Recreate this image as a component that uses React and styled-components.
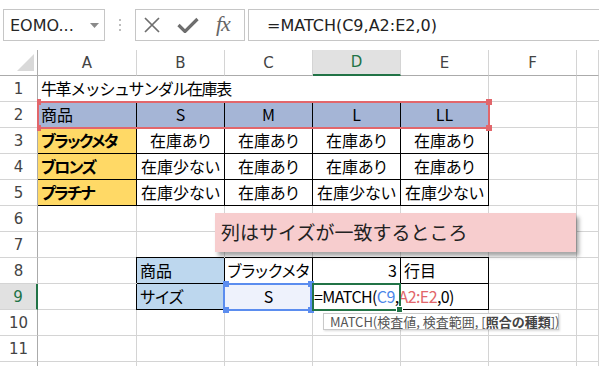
import React from "react";
import styled, { createGlobalStyle } from "styled-components";

const GlobalStyle = createGlobalStyle`
  html, body {
    margin: 0;
    padding: 0;
    background: #fff;
  }
  body {
    font-family: "Noto Sans CJK JP", sans-serif;
  }
`;

const GOLD = "#ffd966";
const HEAD_BLUE = "#a5b5d6";
const LIGHT_BLUE = "#bdd7ee";
const GRID = "#d4d4d4";
const HEAD_LINE = "#ababab";
const GREEN = "#217346";
const RED = "#e2666b";
const BLUE = "#5b8def";

const Page = styled.div`
  width: 599px;
  height: 366px;
  overflow: hidden;
  background: #fff;
`;

const FormulaBar = styled.div`
  height: 50px;
  box-sizing: border-box;
  display: flex;
  align-items: flex-start;
  padding: 9px 0 0 3px;
`;

const NameBox = styled.div`
  width: 102px;
  height: 32px;
  box-sizing: border-box;
  border: 1px solid #c6c6c6;
  display: flex;
  align-items: center;
  justify-content: space-between;
  padding: 0 5px 0 6px;
  font-family: "DejaVu Sans", sans-serif;
  font-size: 16px;
  color: #262626;
`;

const Grip = styled.div`
  width: 30px;
  height: 32px;
  display: flex;
  flex-direction: column;
  align-items: center;
  justify-content: center;
  gap: 3px;
`;

const GripDot = styled.span`
  width: 2px;
  height: 2px;
  background: #bdbdbd;
`;

const FxBox = styled.div`
  width: 110px;
  height: 32px;
  box-sizing: border-box;
  border: 1px solid #c6c6c6;
  display: flex;
  align-items: center;
  gap: 17px;
  padding-left: 8px;
`;

const Fx = styled.span`
  font-family: "Liberation Serif", serif;
  font-style: italic;
  font-size: 22px;
  color: #666;
  letter-spacing: -1px;
  margin-top: -2px;
`;

const FormulaInput = styled.div`
  flex: 1;
  margin-left: 3px;
  height: 32px;
  box-sizing: border-box;
  border: 1px solid #c6c6c6;
  border-right: none;
  display: flex;
  align-items: center;
  padding-left: 18px;
  font-family: "DejaVu Sans", sans-serif;
  font-size: 16px;
  color: #222;
`;

const SheetWrap = styled.div`
  position: relative;
`;

const Sheet = styled.div`
  display: grid;
  grid-template-columns: 38px 99px repeat(5, 88px) 1fr;
  grid-auto-rows: 26px;
`;

const Corner = styled.div`
  box-sizing: border-box;
  border-right: 1px solid ${HEAD_LINE};
  border-bottom: 1px solid ${HEAD_LINE};
  display: flex;
  align-items: flex-end;
  justify-content: flex-end;
  padding: 0 3px 4px 0;
`;

const ColHead = styled.div`
  box-sizing: border-box;
  border-right: 1px solid ${GRID};
  border-bottom: ${(p) => (p.$active ? `2px solid ${GREEN}` : `1px solid ${HEAD_LINE}`)};
  background: ${(p) => (p.$active ? "#e1e1e1" : "#fff")};
  color: ${(p) => (p.$active ? GREEN : "#444")};
  display: flex;
  align-items: center;
  justify-content: center;
  font-family: "DejaVu Sans", sans-serif;
  font-size: 15px;
`;

const RowHead = styled.div`
  box-sizing: border-box;
  border-right: ${(p) => (p.$active ? `2px solid ${GREEN}` : `1px solid ${HEAD_LINE}`)};
  border-bottom: 1px solid ${GRID};
  background: ${(p) => (p.$active ? "#e1e1e1" : "#fff")};
  color: ${(p) => (p.$active ? GREEN : "#444")};
  display: flex;
  align-items: center;
  justify-content: center;
  font-family: "DejaVu Sans", sans-serif;
  font-size: 15px;
`;

const justify = { left: "flex-start", center: "center", right: "flex-end" };

const edgeShadow = (p) => {
  if (p.$top && p.$left) return "-1px -1px 0 #000";
  if (p.$top) return "0 -1px 0 #000";
  if (p.$left) return "-1px 0 0 #000";
  return "none";
};

const Cell = styled.div`
  grid-column: span ${(p) => p.$span || 1};
  box-sizing: border-box;
  min-width: 0;
  border-right: 1px solid ${(p) => (p.$box ? "#000" : GRID)};
  border-bottom: 1px solid ${(p) => (p.$box ? "#000" : GRID)};
  box-shadow: ${edgeShadow};
  background: ${(p) => p.$bg || "transparent"};
  display: flex;
  align-items: center;
  justify-content: ${(p) => justify[p.$align || "left"]};
  padding: 0 3px 1px;
  font-size: 16px;
  font-weight: ${(p) => (p.$bold ? 700 : 400)};
  letter-spacing: ${(p) => (p.$bold ? "-1.6px" : "0")};
  font-feature-settings: "palt";
  white-space: nowrap;
  color: #000;
`;

const Title = styled(Cell)`
  font-feature-settings: normal;
  letter-spacing: -1.4px;
`;

const Formula = styled(Cell)`
  padding-left: 1px;
  overflow: visible;
  letter-spacing: -0.6px;
`;

const Ref = styled.span`
  color: ${(p) => p.$color};
`;

const Range = styled.div`
  position: absolute;
  box-sizing: border-box;
  left: ${(p) => p.$x}px;
  top: ${(p) => p.$y}px;
  width: ${(p) => p.$w}px;
  height: ${(p) => p.$h}px;
  border: 2px solid ${(p) => p.$color};
`;

const Handle = styled.span`
  position: absolute;
  width: ${(p) => p.$size || 6}px;
  height: 6px;
  background: ${(p) => p.$color};
  ${(p) => (p.$right ? "right: -4px;" : "left: -2px;")}
  ${(p) => (p.$bottom ? "bottom: -4px;" : "top: -4px;")}
`;

const FillHandle = styled.span`
  position: absolute;
  right: -4px;
  bottom: -4px;
  width: 5px;
  height: 5px;
  background: ${GREEN};
  border: 1px solid #fff;
`;

const Callout = styled.div`
  position: absolute;
  left: 215px;
  top: 163px;
  width: 361px;
  height: 39px;
  box-sizing: border-box;
  background: #f7cdce;
  box-shadow: 3px 4px 4px rgba(0, 0, 0, 0.35);
  display: flex;
  align-items: center;
  padding: 0 0 2px 6px;
  font-size: 19px;
  color: #222;
`;

const Tip = styled.div`
  position: absolute;
  left: 323px;
  top: 263px;
  width: 236px;
  height: 17px;
  box-sizing: border-box;
  background: #fff;
  border: 1px solid #c9c9c9;
  box-shadow: 1px 1px 2px rgba(0, 0, 0, 0.15);
  display: flex;
  align-items: center;
  padding-left: 6px;
  font-size: 13px;
  color: #555;
  white-space: nowrap;
`;

const TipBold = styled.b`
  font-weight: 700;
  color: #444;
`;

const head = { bg: HEAD_BLUE, box: true };
const plain = (t) => ({ t, box: true, align: "center" });
const empty = () => [{}, {}, {}, {}, {}, {}, {}];

const rows = [
  [{ t: "牛革メッシュサンダル在庫表", span: 5, kind: "title" }, {}, {}],
  [
    { ...head, t: "商品" },
    { ...head, t: "S", align: "center" },
    { ...head, t: "M", align: "center" },
    { ...head, t: "L", align: "center" },
    { ...head, t: "LL", align: "center" },
    {},
    {},
  ],
  [
    { t: "ブラックメタ", bg: GOLD, bold: true, box: true },
    plain("在庫あり"),
    plain("在庫あり"),
    plain("在庫あり"),
    plain("在庫あり"),
    {},
    {},
  ],
  [
    { t: "ブロンズ", bg: GOLD, bold: true, box: true },
    plain("在庫少ない"),
    plain("在庫あり"),
    plain("在庫あり"),
    plain("在庫あり"),
    {},
    {},
  ],
  [
    { t: "プラチナ", bg: GOLD, bold: true, box: true },
    plain("在庫少ない"),
    plain("在庫あり"),
    plain("在庫少ない"),
    plain("在庫少ない"),
    {},
    {},
  ],
  empty(),
  empty(),
  [
    {},
    { t: "商品", bg: LIGHT_BLUE, box: true, top: true, left: true },
    { t: "ブラックメタ", box: true, top: true, align: "center" },
    { t: "3", box: true, top: true, align: "right" },
    { t: "行目", box: true, top: true },
    {},
    {},
  ],
  [
    {},
    { t: "サイズ", bg: LIGHT_BLUE, box: true, left: true },
    { t: "S", bg: "#eef2fc", box: true, align: "center" },
    {
      t: (
        <>
          =MATCH(<Ref $color="#4a86e8">C9</Ref>,<Ref $color={RED}>A2:E2</Ref>,0)
        </>
      ),
      box: true,
      kind: "formula",
    },
    { box: true },
    {},
    {},
  ],
  empty(),
  empty(),
  empty(),
];

const letters = ["A", "B", "C", "D", "E", "F", ""];

const cellKinds = { title: Title, formula: Formula };

export default function App() {
  return (
    <Page>
      <GlobalStyle />
      <FormulaBar>
        <NameBox>
          <span>EOMO...</span>
          <svg width="9" height="5" viewBox="0 0 9 5">
            <path d="M0 0 L9 0 L4.5 5 Z" fill="#8a8a8a" />
          </svg>
        </NameBox>
        <Grip>
          <GripDot />
          <GripDot />
          <GripDot />
        </Grip>
        <FxBox>
          <svg width="16" height="16" viewBox="0 0 16 16">
            <path d="M1 1 L15 15 M15 1 L1 15" stroke="#6e6e6e" strokeWidth="1.7" />
          </svg>
          <svg width="22" height="16" viewBox="0 0 22 16">
            <path d="M1.5 8 L8 14.5 L20.5 2" stroke="#6e6e6e" strokeWidth="3.2" fill="none" />
          </svg>
          <Fx>fx</Fx>
        </FxBox>
        <FormulaInput>=MATCH(C9,A2:E2,0)</FormulaInput>
      </FormulaBar>

      <SheetWrap>
        <Sheet>
          <Corner>
            <svg width="17" height="17" viewBox="0 0 17 17">
              <path d="M17 0 L17 17 L0 17 Z" fill="#d9d9d9" />
            </svg>
          </Corner>
          {letters.map((l, i) => (
            <ColHead key={i} $active={l === "D"}>
              {l}
            </ColHead>
          ))}
          {rows.map((cells, r) => (
            <React.Fragment key={r}>
              <RowHead $active={r === 8}>{r < 11 ? r + 1 : ""}</RowHead>
              {cells.map((c, i) => {
                const C = cellKinds[c.kind] || Cell;
                return (
                  <C
                    key={i}
                    $span={c.span}
                    $bg={c.bg}
                    $box={c.box}
                    $bold={c.bold}
                    $align={c.align}
                    $top={c.top}
                    $left={c.left}
                  >
                    {c.t}
                  </C>
                );
              })}
            </React.Fragment>
          ))}
        </Sheet>

        <Range $x={37} $y={51} $w={453} $h={28} $color={RED}>
          <Handle $color={RED} $size={4} />
          <Handle $color={RED} $size={4} $bottom />
          <Handle $color={RED} $right />
          <Handle $color={RED} $right $bottom />
        </Range>

        <Range $x={223} $y={233} $w={89} $h={28} $color={BLUE}>
          <Handle $color={BLUE} />
          <Handle $color={BLUE} $bottom />
          <Handle $color={BLUE} $right />
          <Handle $color={BLUE} $right $bottom />
        </Range>

        <Range $x={312} $y={233} $w={89} $h={28} $color={GREEN}>
          <FillHandle />
        </Range>

        <Callout>列はサイズが一致するところ</Callout>

        <Tip>
          MATCH(検査値, 検査範囲, [<TipBold>照合の種類</TipBold>])
        </Tip>
      </SheetWrap>
    </Page>
  );
}
